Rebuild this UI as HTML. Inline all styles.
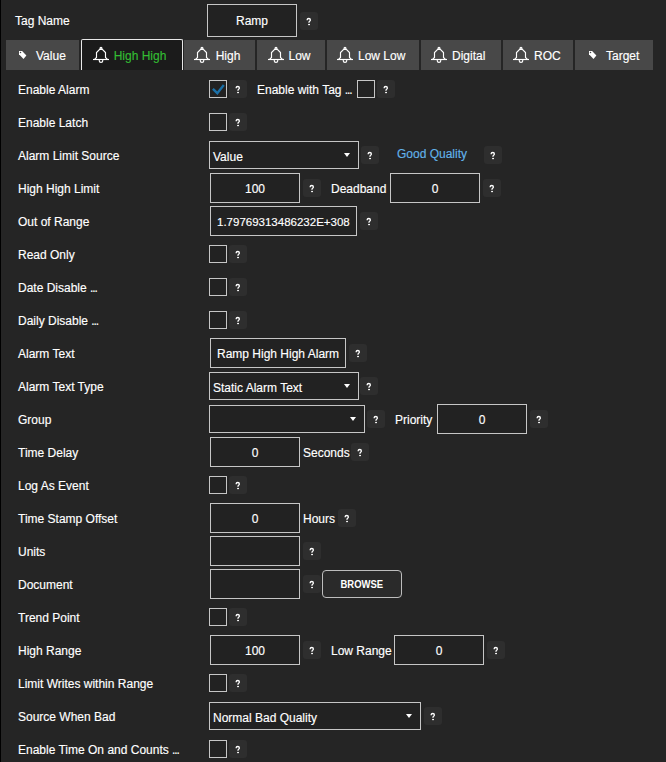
<!DOCTYPE html>
<html><head><meta charset="utf-8"><style>
html,body{margin:0;padding:0;}
body{width:666px;height:762px;background:#252525;position:relative;overflow:hidden;font-family:"Liberation Sans",sans-serif;font-size:12px;color:#fff;-webkit-text-stroke:0.15px;}
.q,.btn{-webkit-text-stroke:0;letter-spacing:0;}
.abs{position:absolute;}
.edge{left:0;top:0;width:1px;height:762px;background:#000;}
.lab{position:absolute;left:18px;height:16px;line-height:16px;white-space:nowrap;}
.t{position:absolute;white-space:nowrap;height:16px;line-height:16px;}
.cb{position:absolute;width:16px;height:16px;border:1px solid #c6c6c6;background:#222;}
.q{position:absolute;width:18px;height:18px;border-radius:3px;background:#2e2e2e;color:#fff;font-weight:bold;font-size:10px;line-height:18px;text-align:center;}
.q span{display:inline-block;transform:scaleX(0.86);position:relative;left:-0.7px;top:1.2px;-webkit-text-stroke:0.2px;}
.tb{position:absolute;height:28px;border:1px solid #c6c6c6;background:#222;line-height:30px;text-align:center;}
.tbl{text-align:left;padding-left:6px;}
.dd{position:absolute;height:26px;border:1px solid #c6c6c6;background:#222;line-height:30px;padding-left:3px;}
.dd .ar{position:absolute;right:8px;top:11px;width:0;height:0;border-left:3.7px solid transparent;border-right:3.7px solid transparent;border-top:4.5px solid #fff;}
.tab{position:absolute;top:40px;height:30px;background:#484848;line-height:30px;white-space:nowrap;}
.tab .ic{position:absolute;top:8px;}
.tab.act{top:39px;height:30px;background:#1b1b1b;border:1px solid #e8e8e8;border-bottom:none;border-radius:2px 2px 0 0;color:#33bd33;}
.btn{position:absolute;height:26px;border:1px solid #bdbdbd;border-radius:4px;background:#2a2a2a;font-weight:bold;font-size:11px;line-height:27px;text-align:center;color:#fff;}
.btn span{display:inline-block;transform:scaleX(0.86);}
.link{color:#62b2e9;}
.el{letter-spacing:-1.1px;}
</style></head><body>
<div class="abs edge"></div>

<div class="t" style="left:15px;top:13px;">Tag Name</div>
<div class="tb" style="left:207px;top:4px;width:88px;height:31px;line-height:33px;">Ramp</div>
<div class="q" style="left:300px;top:12px;"><svg style="display:block" width="18" height="18" viewBox="0 0 18 18"><path d="M7.2 8.3V7.7Q7.2 6.5 8.8 6.5Q10.35 6.5 10.35 7.9Q10.35 8.8 9.6 9.25Q9 9.65 9 10.3V10.8" fill="none" stroke="#fff" stroke-width="1.35"/><rect x="8.15" y="11.9" width="1.8" height="1.25" fill="#fff"/></svg></div>
<div class="tab" style="left:6px;width:73px;"></div>
<div class="abs" style="left:18px;top:50px"><svg style="display:block" width="10" height="10" viewBox="0 0 10 10"><path d="M1 1H4.1L8.4 5.4L5.5 8.9L1 4.2Z" fill="#fff"/><circle cx="2.5" cy="2.5" r="0.75" fill="#484848"/></svg></div>
<div class="t" style="left:36px;top:48px;">Value</div>
<div class="tab act" style="left:81px;width:100px;"></div>
<div class="abs" style="left:92px;top:46px"><svg style="display:block" width="18" height="18" viewBox="0 0 18 18" fill="none" stroke="#fff" stroke-width="1.15"><circle cx="9" cy="2.3" r="0.95"/><path d="M2.6 13.3L4.5 11.4V6.6L7.7 3.3H10.3L13.5 6.6V11.4L15.4 13.3"/><path d="M1 13.5H17"/><path d="M7.3 13.8V15Q7.3 16.4 9 16.4Q10.7 16.4 10.7 15V13.8"/></svg></div>
<div class="t" style="left:113.7px;top:48px;color:#33bd33">High High</div>
<div class="tab" style="left:184px;width:71px;"></div>
<div class="abs" style="left:193px;top:46px"><svg style="display:block" width="18" height="18" viewBox="0 0 18 18" fill="none" stroke="#fff" stroke-width="1.15"><circle cx="9" cy="2.3" r="0.95"/><path d="M2.6 13.3L4.5 11.4V6.6L7.7 3.3H10.3L13.5 6.6V11.4L15.4 13.3"/><path d="M1 13.5H17"/><path d="M7.3 13.8V15Q7.3 16.4 9 16.4Q10.7 16.4 10.7 15V13.8"/></svg></div>
<div class="t" style="left:215.7px;top:48px;">High</div>
<div class="tab" style="left:257px;width:68px;"></div>
<div class="abs" style="left:267px;top:46px"><svg style="display:block" width="18" height="18" viewBox="0 0 18 18" fill="none" stroke="#fff" stroke-width="1.15"><circle cx="9" cy="2.3" r="0.95"/><path d="M2.6 13.3L4.5 11.4V6.6L7.7 3.3H10.3L13.5 6.6V11.4L15.4 13.3"/><path d="M1 13.5H17"/><path d="M7.3 13.8V15Q7.3 16.4 9 16.4Q10.7 16.4 10.7 15V13.8"/></svg></div>
<div class="t" style="left:288.5px;top:48px;">Low</div>
<div class="tab" style="left:327px;width:92px;"></div>
<div class="abs" style="left:336px;top:46px"><svg style="display:block" width="18" height="18" viewBox="0 0 18 18" fill="none" stroke="#fff" stroke-width="1.15"><circle cx="9" cy="2.3" r="0.95"/><path d="M2.6 13.3L4.5 11.4V6.6L7.7 3.3H10.3L13.5 6.6V11.4L15.4 13.3"/><path d="M1 13.5H17"/><path d="M7.3 13.8V15Q7.3 16.4 9 16.4Q10.7 16.4 10.7 15V13.8"/></svg></div>
<div class="t" style="left:358px;top:48px;">Low Low</div>
<div class="tab" style="left:421px;width:80px;"></div>
<div class="abs" style="left:430px;top:46px"><svg style="display:block" width="18" height="18" viewBox="0 0 18 18" fill="none" stroke="#fff" stroke-width="1.15"><circle cx="9" cy="2.3" r="0.95"/><path d="M2.6 13.3L4.5 11.4V6.6L7.7 3.3H10.3L13.5 6.6V11.4L15.4 13.3"/><path d="M1 13.5H17"/><path d="M7.3 13.8V15Q7.3 16.4 9 16.4Q10.7 16.4 10.7 15V13.8"/></svg></div>
<div class="t" style="left:452px;top:48px;">Digital</div>
<div class="tab" style="left:503px;width:70px;"></div>
<div class="abs" style="left:512px;top:46px"><svg style="display:block" width="18" height="18" viewBox="0 0 18 18" fill="none" stroke="#fff" stroke-width="1.15"><circle cx="9" cy="2.3" r="0.95"/><path d="M2.6 13.3L4.5 11.4V6.6L7.7 3.3H10.3L13.5 6.6V11.4L15.4 13.3"/><path d="M1 13.5H17"/><path d="M7.3 13.8V15Q7.3 16.4 9 16.4Q10.7 16.4 10.7 15V13.8"/></svg></div>
<div class="t" style="left:534px;top:48px;">ROC</div>
<div class="tab" style="left:575px;width:78px;"></div>
<div class="abs" style="left:588px;top:50px"><svg style="display:block" width="10" height="10" viewBox="0 0 10 10"><path d="M1 1H4.1L8.4 5.4L5.5 8.9L1 4.2Z" fill="#fff"/><circle cx="2.5" cy="2.5" r="0.75" fill="#484848"/></svg></div>
<div class="t" style="left:606px;top:48px;">Target</div>
<div class="lab" style="top:82px">Enable Alarm</div>
<div class="cb" style="left:209px;top:80px"><svg class="abs" style="left:1px;top:2px" width="14" height="12" viewBox="0 0 14 12"><path d="M1.9 5.9L6.3 10.2L12.8 2" fill="none" stroke="#1a70a8" stroke-width="2.4"/></svg></div>
<div class="q" style="left:229px;top:80px"><svg style="display:block" width="18" height="18" viewBox="0 0 18 18"><path d="M7.2 8.3V7.7Q7.2 6.5 8.8 6.5Q10.35 6.5 10.35 7.9Q10.35 8.8 9.6 9.25Q9 9.65 9 10.3V10.8" fill="none" stroke="#fff" stroke-width="1.35"/><rect x="8.15" y="11.9" width="1.8" height="1.25" fill="#fff"/></svg></div>
<div class="t" style="left:257px;top:82px">Enable with Tag <span class=el>...</span></div>
<div class="cb" style="left:357px;top:80px"></div>
<div class="q" style="left:377px;top:80px"><svg style="display:block" width="18" height="18" viewBox="0 0 18 18"><path d="M7.2 8.3V7.7Q7.2 6.5 8.8 6.5Q10.35 6.5 10.35 7.9Q10.35 8.8 9.6 9.25Q9 9.65 9 10.3V10.8" fill="none" stroke="#fff" stroke-width="1.35"/><rect x="8.15" y="11.9" width="1.8" height="1.25" fill="#fff"/></svg></div>
<div class="lab" style="top:115px">Enable Latch</div>
<div class="cb" style="left:209px;top:113px"></div>
<div class="q" style="left:229px;top:113px"><svg style="display:block" width="18" height="18" viewBox="0 0 18 18"><path d="M7.2 8.3V7.7Q7.2 6.5 8.8 6.5Q10.35 6.5 10.35 7.9Q10.35 8.8 9.6 9.25Q9 9.65 9 10.3V10.8" fill="none" stroke="#fff" stroke-width="1.35"/><rect x="8.15" y="11.9" width="1.8" height="1.25" fill="#fff"/></svg></div>
<div class="lab" style="top:148px">Alarm Limit Source</div>
<div class="dd" style="left:209px;top:141px;width:145px;">Value<span class="ar"></span></div>
<div class="q" style="left:361px;top:146px"><svg style="display:block" width="18" height="18" viewBox="0 0 18 18"><path d="M7.2 8.3V7.7Q7.2 6.5 8.8 6.5Q10.35 6.5 10.35 7.9Q10.35 8.8 9.6 9.25Q9 9.65 9 10.3V10.8" fill="none" stroke="#fff" stroke-width="1.35"/><rect x="8.15" y="11.9" width="1.8" height="1.25" fill="#fff"/></svg></div>
<div class="t link" style="left:397px;top:146px">Good Quality</div>
<div class="q" style="left:484px;top:146px"><svg style="display:block" width="18" height="18" viewBox="0 0 18 18"><path d="M7.2 8.3V7.7Q7.2 6.5 8.8 6.5Q10.35 6.5 10.35 7.9Q10.35 8.8 9.6 9.25Q9 9.65 9 10.3V10.8" fill="none" stroke="#fff" stroke-width="1.35"/><rect x="8.15" y="11.9" width="1.8" height="1.25" fill="#fff"/></svg></div>
<div class="lab" style="top:181px">High High Limit</div>
<div class="tb" style="left:210px;top:173px;width:88px;">100</div>
<div class="q" style="left:303px;top:179px"><svg style="display:block" width="18" height="18" viewBox="0 0 18 18"><path d="M7.2 8.3V7.7Q7.2 6.5 8.8 6.5Q10.35 6.5 10.35 7.9Q10.35 8.8 9.6 9.25Q9 9.65 9 10.3V10.8" fill="none" stroke="#fff" stroke-width="1.35"/><rect x="8.15" y="11.9" width="1.8" height="1.25" fill="#fff"/></svg></div>
<div class="t" style="left:331px;top:181px">Deadband</div>
<div class="tb" style="left:390px;top:173px;width:88px;">0</div>
<div class="q" style="left:483px;top:179px"><svg style="display:block" width="18" height="18" viewBox="0 0 18 18"><path d="M7.2 8.3V7.7Q7.2 6.5 8.8 6.5Q10.35 6.5 10.35 7.9Q10.35 8.8 9.6 9.25Q9 9.65 9 10.3V10.8" fill="none" stroke="#fff" stroke-width="1.35"/><rect x="8.15" y="11.9" width="1.8" height="1.25" fill="#fff"/></svg></div>
<div class="lab" style="top:214px">Out of Range</div>
<div class="tb tbl" style="left:210px;top:206px;width:139px;font-size:11.5px">1.79769313486232E+308</div>
<div class="q" style="left:360px;top:212px"><svg style="display:block" width="18" height="18" viewBox="0 0 18 18"><path d="M7.2 8.3V7.7Q7.2 6.5 8.8 6.5Q10.35 6.5 10.35 7.9Q10.35 8.8 9.6 9.25Q9 9.65 9 10.3V10.8" fill="none" stroke="#fff" stroke-width="1.35"/><rect x="8.15" y="11.9" width="1.8" height="1.25" fill="#fff"/></svg></div>
<div class="lab" style="top:247px">Read Only</div>
<div class="cb" style="left:209px;top:245px"></div>
<div class="q" style="left:229px;top:245px"><svg style="display:block" width="18" height="18" viewBox="0 0 18 18"><path d="M7.2 8.3V7.7Q7.2 6.5 8.8 6.5Q10.35 6.5 10.35 7.9Q10.35 8.8 9.6 9.25Q9 9.65 9 10.3V10.8" fill="none" stroke="#fff" stroke-width="1.35"/><rect x="8.15" y="11.9" width="1.8" height="1.25" fill="#fff"/></svg></div>
<div class="lab" style="top:280px">Date Disable <span class=el>...</span></div>
<div class="cb" style="left:209px;top:278px"></div>
<div class="q" style="left:229px;top:278px"><svg style="display:block" width="18" height="18" viewBox="0 0 18 18"><path d="M7.2 8.3V7.7Q7.2 6.5 8.8 6.5Q10.35 6.5 10.35 7.9Q10.35 8.8 9.6 9.25Q9 9.65 9 10.3V10.8" fill="none" stroke="#fff" stroke-width="1.35"/><rect x="8.15" y="11.9" width="1.8" height="1.25" fill="#fff"/></svg></div>
<div class="lab" style="top:313px">Daily Disable <span class=el>...</span></div>
<div class="cb" style="left:209px;top:311px"></div>
<div class="q" style="left:229px;top:311px"><svg style="display:block" width="18" height="18" viewBox="0 0 18 18"><path d="M7.2 8.3V7.7Q7.2 6.5 8.8 6.5Q10.35 6.5 10.35 7.9Q10.35 8.8 9.6 9.25Q9 9.65 9 10.3V10.8" fill="none" stroke="#fff" stroke-width="1.35"/><rect x="8.15" y="11.9" width="1.8" height="1.25" fill="#fff"/></svg></div>
<div class="lab" style="top:346px">Alarm Text</div>
<div class="tb tbl" style="left:210px;top:338px;width:128px;">Ramp High High Alarm</div>
<div class="q" style="left:349px;top:344px"><svg style="display:block" width="18" height="18" viewBox="0 0 18 18"><path d="M7.2 8.3V7.7Q7.2 6.5 8.8 6.5Q10.35 6.5 10.35 7.9Q10.35 8.8 9.6 9.25Q9 9.65 9 10.3V10.8" fill="none" stroke="#fff" stroke-width="1.35"/><rect x="8.15" y="11.9" width="1.8" height="1.25" fill="#fff"/></svg></div>
<div class="lab" style="top:379px">Alarm Text Type</div>
<div class="dd" style="left:209px;top:372px;width:145px;">Static Alarm Text<span class="ar"></span></div>
<div class="q" style="left:360px;top:377px"><svg style="display:block" width="18" height="18" viewBox="0 0 18 18"><path d="M7.2 8.3V7.7Q7.2 6.5 8.8 6.5Q10.35 6.5 10.35 7.9Q10.35 8.8 9.6 9.25Q9 9.65 9 10.3V10.8" fill="none" stroke="#fff" stroke-width="1.35"/><rect x="8.15" y="11.9" width="1.8" height="1.25" fill="#fff"/></svg></div>
<div class="lab" style="top:412px">Group</div>
<div class="dd" style="left:209px;top:405px;width:151px;"><span class="ar"></span></div>
<div class="q" style="left:367px;top:410px"><svg style="display:block" width="18" height="18" viewBox="0 0 18 18"><path d="M7.2 8.3V7.7Q7.2 6.5 8.8 6.5Q10.35 6.5 10.35 7.9Q10.35 8.8 9.6 9.25Q9 9.65 9 10.3V10.8" fill="none" stroke="#fff" stroke-width="1.35"/><rect x="8.15" y="11.9" width="1.8" height="1.25" fill="#fff"/></svg></div>
<div class="t" style="left:395px;top:412px">Priority</div>
<div class="tb" style="left:437px;top:404px;width:88px;">0</div>
<div class="q" style="left:530px;top:410px"><svg style="display:block" width="18" height="18" viewBox="0 0 18 18"><path d="M7.2 8.3V7.7Q7.2 6.5 8.8 6.5Q10.35 6.5 10.35 7.9Q10.35 8.8 9.6 9.25Q9 9.65 9 10.3V10.8" fill="none" stroke="#fff" stroke-width="1.35"/><rect x="8.15" y="11.9" width="1.8" height="1.25" fill="#fff"/></svg></div>
<div class="lab" style="top:445px">Time Delay</div>
<div class="tb" style="left:210px;top:437px;width:88px;">0</div>
<div class="t" style="left:303px;top:445px">Seconds</div>
<div class="q" style="left:351px;top:443px"><svg style="display:block" width="18" height="18" viewBox="0 0 18 18"><path d="M7.2 8.3V7.7Q7.2 6.5 8.8 6.5Q10.35 6.5 10.35 7.9Q10.35 8.8 9.6 9.25Q9 9.65 9 10.3V10.8" fill="none" stroke="#fff" stroke-width="1.35"/><rect x="8.15" y="11.9" width="1.8" height="1.25" fill="#fff"/></svg></div>
<div class="lab" style="top:478px">Log As Event</div>
<div class="cb" style="left:209px;top:476px"></div>
<div class="q" style="left:229px;top:476px"><svg style="display:block" width="18" height="18" viewBox="0 0 18 18"><path d="M7.2 8.3V7.7Q7.2 6.5 8.8 6.5Q10.35 6.5 10.35 7.9Q10.35 8.8 9.6 9.25Q9 9.65 9 10.3V10.8" fill="none" stroke="#fff" stroke-width="1.35"/><rect x="8.15" y="11.9" width="1.8" height="1.25" fill="#fff"/></svg></div>
<div class="lab" style="top:511px">Time Stamp Offset</div>
<div class="tb" style="left:210px;top:503px;width:88px;">0</div>
<div class="t" style="left:303px;top:511px">Hours</div>
<div class="q" style="left:338px;top:509px"><svg style="display:block" width="18" height="18" viewBox="0 0 18 18"><path d="M7.2 8.3V7.7Q7.2 6.5 8.8 6.5Q10.35 6.5 10.35 7.9Q10.35 8.8 9.6 9.25Q9 9.65 9 10.3V10.8" fill="none" stroke="#fff" stroke-width="1.35"/><rect x="8.15" y="11.9" width="1.8" height="1.25" fill="#fff"/></svg></div>
<div class="lab" style="top:544px">Units</div>
<div class="tb" style="left:210px;top:536px;width:88px;"></div>
<div class="q" style="left:303px;top:542px"><svg style="display:block" width="18" height="18" viewBox="0 0 18 18"><path d="M7.2 8.3V7.7Q7.2 6.5 8.8 6.5Q10.35 6.5 10.35 7.9Q10.35 8.8 9.6 9.25Q9 9.65 9 10.3V10.8" fill="none" stroke="#fff" stroke-width="1.35"/><rect x="8.15" y="11.9" width="1.8" height="1.25" fill="#fff"/></svg></div>
<div class="lab" style="top:577px">Document</div>
<div class="tb" style="left:210px;top:569px;width:88px;"></div>
<div class="q" style="left:303px;top:575px"><svg style="display:block" width="18" height="18" viewBox="0 0 18 18"><path d="M7.2 8.3V7.7Q7.2 6.5 8.8 6.5Q10.35 6.5 10.35 7.9Q10.35 8.8 9.6 9.25Q9 9.65 9 10.3V10.8" fill="none" stroke="#fff" stroke-width="1.35"/><rect x="8.15" y="11.9" width="1.8" height="1.25" fill="#fff"/></svg></div>
<div class="btn" style="left:322px;top:570px;width:78px;"><span>BROWSE</span></div>
<div class="lab" style="top:610px">Trend Point</div>
<div class="cb" style="left:209px;top:608px"></div>
<div class="q" style="left:229px;top:608px"><svg style="display:block" width="18" height="18" viewBox="0 0 18 18"><path d="M7.2 8.3V7.7Q7.2 6.5 8.8 6.5Q10.35 6.5 10.35 7.9Q10.35 8.8 9.6 9.25Q9 9.65 9 10.3V10.8" fill="none" stroke="#fff" stroke-width="1.35"/><rect x="8.15" y="11.9" width="1.8" height="1.25" fill="#fff"/></svg></div>
<div class="lab" style="top:643px">High Range</div>
<div class="tb" style="left:210px;top:635px;width:88px;">100</div>
<div class="q" style="left:303px;top:641px"><svg style="display:block" width="18" height="18" viewBox="0 0 18 18"><path d="M7.2 8.3V7.7Q7.2 6.5 8.8 6.5Q10.35 6.5 10.35 7.9Q10.35 8.8 9.6 9.25Q9 9.65 9 10.3V10.8" fill="none" stroke="#fff" stroke-width="1.35"/><rect x="8.15" y="11.9" width="1.8" height="1.25" fill="#fff"/></svg></div>
<div class="t" style="left:331px;top:643px">Low Range</div>
<div class="tb" style="left:394px;top:635px;width:88px;">0</div>
<div class="q" style="left:487px;top:641px"><svg style="display:block" width="18" height="18" viewBox="0 0 18 18"><path d="M7.2 8.3V7.7Q7.2 6.5 8.8 6.5Q10.35 6.5 10.35 7.9Q10.35 8.8 9.6 9.25Q9 9.65 9 10.3V10.8" fill="none" stroke="#fff" stroke-width="1.35"/><rect x="8.15" y="11.9" width="1.8" height="1.25" fill="#fff"/></svg></div>
<div class="lab" style="top:676px">Limit Writes within Range</div>
<div class="cb" style="left:209px;top:674px"></div>
<div class="q" style="left:229px;top:674px"><svg style="display:block" width="18" height="18" viewBox="0 0 18 18"><path d="M7.2 8.3V7.7Q7.2 6.5 8.8 6.5Q10.35 6.5 10.35 7.9Q10.35 8.8 9.6 9.25Q9 9.65 9 10.3V10.8" fill="none" stroke="#fff" stroke-width="1.35"/><rect x="8.15" y="11.9" width="1.8" height="1.25" fill="#fff"/></svg></div>
<div class="lab" style="top:709px">Source When Bad</div>
<div class="dd" style="left:209px;top:702px;width:207px;">Normal Bad Quality<span class="ar"></span></div>
<div class="q" style="left:424px;top:707px"><svg style="display:block" width="18" height="18" viewBox="0 0 18 18"><path d="M7.2 8.3V7.7Q7.2 6.5 8.8 6.5Q10.35 6.5 10.35 7.9Q10.35 8.8 9.6 9.25Q9 9.65 9 10.3V10.8" fill="none" stroke="#fff" stroke-width="1.35"/><rect x="8.15" y="11.9" width="1.8" height="1.25" fill="#fff"/></svg></div>
<div class="lab" style="top:742px">Enable Time On and Counts <span class=el>...</span></div>
<div class="cb" style="left:209px;top:740px"></div>
<div class="q" style="left:229px;top:740px"><svg style="display:block" width="18" height="18" viewBox="0 0 18 18"><path d="M7.2 8.3V7.7Q7.2 6.5 8.8 6.5Q10.35 6.5 10.35 7.9Q10.35 8.8 9.6 9.25Q9 9.65 9 10.3V10.8" fill="none" stroke="#fff" stroke-width="1.35"/><rect x="8.15" y="11.9" width="1.8" height="1.25" fill="#fff"/></svg></div>
</body></html>
